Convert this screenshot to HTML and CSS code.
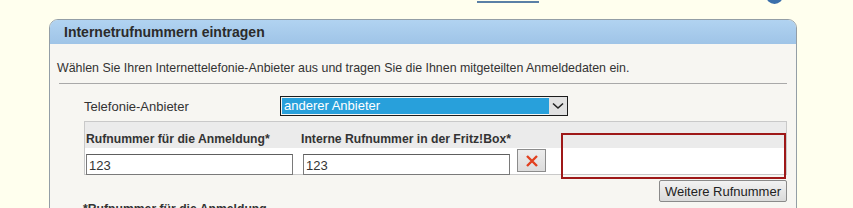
FILE: index.html
```html
<!DOCTYPE html>
<html lang="de">
<head>
    <meta charset="UTF-8">
    <meta name="viewport" content="width=device-width, initial-scale=1.0">
    <title>Internetrufnummern eintragen</title>
    <link rel="stylesheet" href="styles.css">
</head>
<body>
    <div class="topbar">
        <span class="tab-line"></span>
        <span class="help-dot"></span>
    </div>

    <div class="box">
        <div class="box-head">Internetrufnummern eintragen</div>
        <div class="box-body">
            <p class="intro">Wählen Sie Ihren Internettelefonie-Anbieter aus und tragen Sie die Ihnen mitgeteilten Anmeldedaten ein.</p>
            <hr class="trenner">

            <div class="anbieter-zeile">
                <span class="anbieter-label">Telefonie-Anbieter</span>
                <div class="auswahl">
                    <span class="auswahl-wert">anderer Anbieter</span>
                    <span class="auswahl-pfeil">
                        <svg width="12" height="8" viewBox="0 0 12 8"><path d="M1 1.5 L6 6 L11 1.5" fill="none" stroke="#222" stroke-width="1.6"/></svg>
                    </span>
                </div>
            </div>

            <div class="nummern">
                <div class="tabelle">
                    <div class="kopf">Rufnummer für die Anmeldung*</div>
                    <div class="kopf">Interne Rufnummer in der Fritz!Box*</div>
                    <div class="kopf"></div>
                    <div class="zelle"><input class="feld" type="text" value="123"></div>
                    <div class="zelle"><input class="feld" type="text" value="123"></div>
                    <div class="zelle">
                        <button class="btn-loeschen" title="Löschen">
                            <svg width="14" height="14" viewBox="0 0 14 14"><path d="M2 2 L12 12 M12 2 L2 12" stroke="#e2401f" stroke-width="2.4" stroke-linecap="butt"/></svg>
                        </button>
                    </div>
                </div>
                <div class="markierung"></div>
            </div>

            <div class="weitere-zeile">
                <button class="btn-weitere">Weitere Rufnummer</button>
            </div>

            <p class="hinweis">*Rufnummer für die Anmeldung</p>
        </div>
    </div>
</body>
</html>
```

FILE: styles.css
```css
body {
    margin: 0;
    padding: 0;
    background-color: #ffffee;
    font-family: "Liberation Sans", Arial, sans-serif;
    font-size: 13px;
    color: #333;
    overflow: hidden;
}
.topbar {
    height: 19px;
    position: relative;
}
.tab-line {
    position: absolute;
    left: 477px;
    top: 1px;
    width: 62px;
    height: 2px;
    background-color: #5a80a6;
}
.help-dot {
    position: absolute;
    left: 766px;
    top: -13px;
    width: 17px;
    height: 17px;
    border-radius: 50%;
    background-color: #3b6fab;
}
.box {
    margin-left: 49px;
    width: 746px;
    border: 1px solid #939ea6;
    border-radius: 9px 9px 0 0;
    background-color: #f7f6f2;
    height: 300px;
}
.box-head {
    height: 24px;
    line-height: 25px;
    padding-left: 14px;
    font-weight: bold;
    font-size: 14px;
    color: #2b2b2b;
    background: linear-gradient(#b1d3f1, #9fc4e7);
    border-radius: 8px 8px 0 0;
}
.box-body {
    padding: 0 8px 0 7px;
}
.intro {
    margin: 0;
    padding-top: 16px;
    line-height: 16px;
    font-size: 12.4px;
    color: #333;
}
.trenner {
    margin: 7px 1px 0 2px;
    border: none;
    border-top: 1px solid #a9a9a9;
}
.anbieter-zeile {
    display: flex;
    align-items: center;
    margin-top: 12px;
    padding-left: 27px;
}
.anbieter-label {
    width: 196px;
}
.auswahl {
    display: flex;
    width: 286px;
    height: 18px;
    border: 1px solid #1c1c1c;
}
.auswahl-wert {
    flex: 1;
    margin: 1px 0 1px 1px;
    padding-left: 2px;
    line-height: 16px;
    background-color: #28a0db;
    color: #fff;
}
.auswahl-pfeil {
    width: 18px;
    display: flex;
    align-items: center;
    justify-content: center;
    background-color: #e1e1e1;
}
.nummern {
    position: relative;
    margin-top: 5px;
    margin-left: 27px;
    margin-right: 1px;
}
.tabelle {
    display: grid;
    grid-template-columns: 216px 214px 1fr;
    grid-template-rows: 26px 26px;
    border: 1px solid #c9c9c9;
    background-color: #fff;
}
.kopf {
    background-color: #ebebeb;
    font-weight: bold;
    font-size: 12.2px;
    white-space: nowrap;
    padding: 10px 0 0 1px;
    line-height: 14px;
}
.kopf:nth-child(2) {
    padding-left: 0;
}
.zelle {
    padding: 6px 0 0 1px;
}
.zelle:nth-child(5) {
    padding-left: 2px;
}
.zelle:nth-child(6) {
    padding: 1px 0 0 2px;
}
.feld {
    box-sizing: border-box;
    width: 207px;
    height: 21px;
    margin: 0;
    padding: 1px 2px 0;
    border: 1px solid #7a7a7a;
    border-top-color: #5e5e5e;
    font-family: "Liberation Sans", Arial, sans-serif;
    font-size: 13px;
    color: #333;
    background-color: #fff;
}
.btn-loeschen {
    box-sizing: border-box;
    width: 29px;
    height: 23px;
    margin: 0;
    padding: 0;
    display: flex;
    align-items: center;
    justify-content: center;
    border: 1px solid #8c8c8c;
    background: linear-gradient(#ededed, #dcdcdc);
}
.markierung {
    position: absolute;
    left: 477px;
    top: 12px;
    width: 221px;
    height: 42px;
    border: 2px solid #9e1818;
}
.weitere-zeile {
    display: flex;
    justify-content: flex-end;
    margin-top: 5px;
    margin-right: 1px;
}
.btn-weitere {
    box-sizing: border-box;
    height: 22px;
    padding: 0 5px;
    margin: 0;
    border: 1px solid #8a8a8a;
    border-radius: 2px;
    background: linear-gradient(#f2f2f2, #dadada);
    font-family: "Liberation Sans", Arial, sans-serif;
    font-size: 13px;
    color: #222;
}
.hinweis {
    margin: 0;
    padding-top: 0;
    padding-left: 26px;
    font-weight: bold;
    font-size: 12.2px;
    line-height: 14px;
}
```
